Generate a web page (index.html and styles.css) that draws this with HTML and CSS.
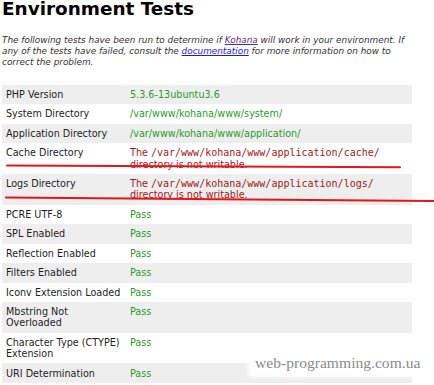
FILE: index.html
```html
<!DOCTYPE html>
<html>
<head>
<meta charset="utf-8">
<link rel="stylesheet" href="styles.css">
</head>
<body>
<div class="page">
  <h1 class="title">Environment Tests</h1>
  <p class="intro">The following tests have been run to determine if <a class="visited" href="#k">Kohana</a> will work in your environment. If any of the tests have failed, consult the <a class="link" href="#d">documentation</a> for more information on how to correct the problem.</p>
  <table class="tests">
    <tr><th>PHP Version</th><td class="pass">5.3.6-13ubuntu3.6</td></tr>
    <tr><th>System Directory</th><td class="pass">/var/www/kohana/www/system/</td></tr>
    <tr><th>Application Directory</th><td class="pass">/var/www/kohana/www/application/</td></tr>
    <tr><th>Cache Directory</th><td class="fail">The <code>/var/www/kohana/www/application/cache/</code> directory is not writable.</td></tr>
    <tr><th>Logs Directory</th><td class="fail">The <code>/var/www/kohana/www/application/logs/</code> directory is not writable.</td></tr>
    <tr><th>PCRE UTF-8</th><td class="pass">Pass</td></tr>
    <tr><th>SPL Enabled</th><td class="pass">Pass</td></tr>
    <tr><th>Reflection Enabled</th><td class="pass">Pass</td></tr>
    <tr><th>Filters Enabled</th><td class="pass">Pass</td></tr>
    <tr><th>Iconv Extension Loaded</th><td class="pass">Pass</td></tr>
    <tr><th>Mbstring Not Overloaded</th><td class="pass">Pass</td></tr>
    <tr><th>Character Type (CTYPE) Extension</th><td class="pass">Pass</td></tr>
    <tr><th>URI Determination</th><td class="pass">Pass</td></tr>
  </table>
</div>
<svg class="marks" width="434" height="385" viewBox="0 0 434 385">
  <line x1="7" y1="165.6" x2="400" y2="167.3" stroke="#e8141a" stroke-width="2" stroke-linecap="round"/>
  <line x1="6" y1="197.6" x2="436" y2="201" stroke="#e8141a" stroke-width="2" stroke-linecap="round"/>
</svg>
<div class="watermark">web-programming.com.ua</div>
</body>
</html>
```

FILE: styles.css
```css
html, body {
  margin: 0;
  padding: 0;
  background: #fff;
}
body {
  font-family: "DejaVu Sans", sans-serif;
  font-size: 9.65px;
  line-height: 11.2px;
  color: #222;
  overflow: hidden;
  width: 434px;
  height: 385px;
  position: relative;
}
.page {
  width: 410px;
  padding-left: 2px;
}
.title {
  margin: 0;
  font-size: 18.4px;
  line-height: 18px;
  font-weight: bold;
  color: #000;
  letter-spacing: 0;
}
.intro {
  width: 416px;
  margin: 16.6px 0 0 0;
  font-size: 8.9px;
  line-height: 11.2px;
  font-style: italic;
  color: #333;
}
.visited {
  color: #5b2a91;
}
.link {
  color: #1a1ae6;
}
.tests {
  margin-top: 16.6px;
  width: 410px;
  border-collapse: collapse;
}
.tests th, .tests td {
  padding: 4.15px 4px;
  text-align: left;
  vertical-align: top;
  line-height: 11.2px;
}
.tests th {
  width: 116px;
  font-weight: normal;
  color: #1e1e1e;
}
.tests tr:nth-child(odd) {
  background: #eeeeee;
}
.pass {
  color: #2b9b2b;
}
.fail {
  color: #a11a1a;
}
.fail code {
  font-family: "DejaVu Sans Mono", monospace;
  font-size: 10px;
  line-height: 11.2px;
}
.marks {
  position: absolute;
  left: 0;
  top: 0;
  pointer-events: none;
}
.watermark {
  position: absolute;
  left: 250px;
  top: 351px;
  padding: 4px 5px 4px 5px;
  background: #fff;
  font-family: "Liberation Serif", serif;
  font-size: 15.6px;
  line-height: 16px;
  color: #8c8c8c;
  text-shadow: 0 0 2px #fff;
  box-shadow: 0 0 4px 2px #fff;
}
```
